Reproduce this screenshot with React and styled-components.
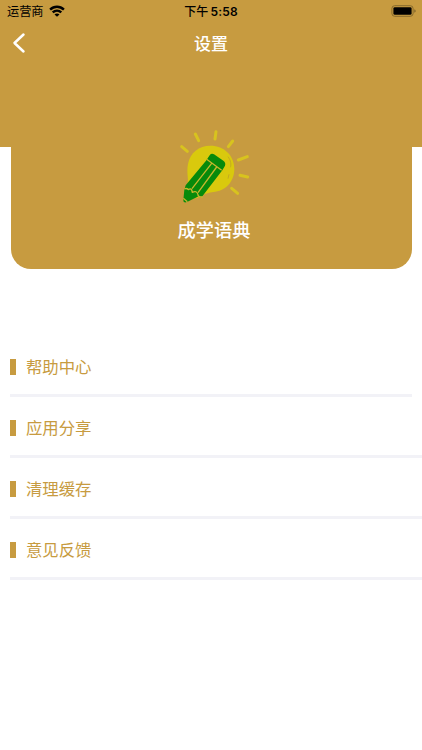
import styled, { createGlobalStyle } from 'styled-components';

const GOLD = '#c79b40';

const GlobalStyle = createGlobalStyle`
  * {
    box-sizing: border-box;
  }

  body {
    margin: 0;
    background: #fff;
    font-family: 'Inter', 'Noto Sans CJK SC', sans-serif;
    overflow: hidden;
  }
`;

const Screen = styled.div`
  height: 750px;
  overflow: hidden;
`;

const Header = styled.header`
  height: 147px;
  background: ${GOLD};
`;

const StatusBar = styled.div`
  display: grid;
  grid-template-columns: 1fr auto 1fr;
  align-items: center;
  height: 22px;
  padding: 0 6px 0 7px;
  color: #000;
  font-size: 12.2px;
  line-height: 20px;
`;

const Carrier = styled.div`
  display: flex;
  align-items: center;
  gap: 5px;

  span {
    padding-top: 2px;
  }
`;

const Time = styled.div`
  padding: 2px 1px 0 0;
  font-size: 12px;
  font-weight: 500;
  white-space: nowrap;
  word-spacing: -1px;
`;

const Digits = styled.span`
  font-weight: 600;
  letter-spacing: 0.2px;
`;

const Battery = styled.svg`
  justify-self: end;
`;

const NavBar = styled.nav`
  display: grid;
  grid-template-columns: 1fr auto 1fr;
  align-items: center;
  height: 42px;
  padding: 0 12px;
`;

const BackButton = styled.button`
  display: flex;
  width: 14px;
  padding: 0;
  border: 0;
  background: none;
`;

const Title = styled.h1`
  margin: 0;
  padding-top: 2px;
  color: #fff;
  font-size: 17px;
  font-weight: 500;
  line-height: 24px;
`;

const Card = styled.section`
  display: flex;
  flex-direction: column;
  align-items: center;
  height: 149px;
  margin: -27px 10.5px 0;
  padding-left: 7px;
  background: ${GOLD};
  border-radius: 0 0 20px 20px;
`;

const AppName = styled.div`
  color: #fff;
  font-size: 18.2px;
  font-weight: 500;
  line-height: 26px;
  margin: 7px 0 0 -1px;
`;

const Menu = styled.ul`
  margin: 67px 0 0;
  padding: 0 0 0 10.4px;
  list-style: none;
`;

const MenuItem = styled.li`
  display: flex;
  align-items: center;
  gap: 10px;
  height: 61px;
  padding-top: 3px;
  margin-right: ${({ $inset }) => ($inset ? '10.5px' : '0')};
  border-bottom: 3px solid #f2f2f7;
  color: ${GOLD};
  font-size: 16.4px;
  line-height: 24px;

  &::before {
    content: '';
    width: 5.5px;
    height: 16px;
    background: ${GOLD};
  }
`;

const items = ['帮助中心', '应用分享', '清理缓存', '意见反馈'];

const WifiIcon = () => (
  <svg width="16" height="12" viewBox="0 0 16 12" fill="none" stroke="#000" strokeWidth="2.4">
    <path d="M1.1 4.6C5 .8 11 .8 14.9 4.6" />
    <path d="M3.7 7.4C6.2 5.1 9.8 5.1 12.3 7.4" />
    <path d="M8 11.8 5.5 9.4C7 8.2 9 8.2 10.5 9.4Z" fill="#000" stroke="none" />
  </svg>
);

const BatteryIcon = () => (
  <Battery width="25" height="12" viewBox="0 0 25 12">
    <rect x=".9" y=".7" width="21.2" height="10.6" rx="2.8" fill="none" stroke="#866a2c" />
    <rect x="2.4" y="2.2" width="18.2" height="7.6" rx="1.4" fill="#000" />
    <path d="M23.4 4.2C25 4.8 25 7.2 23.4 7.8Z" fill="#765c26" />
  </Battery>
);

const Logo = () => (
  <svg width="90" height="90" viewBox="0 0 270 270">
    <g stroke="#d8c31e" strokeWidth="9" strokeLinecap="round">
      <path d="M35 80 52 94M76 42 86 62M138 35 135 57M188 63 175 80M205 120 232 110M210 166 233 171M185 205 203 220" />
    </g>
    <path
      d="M53 190C56 174 49 158 54 132C60 98 87 77 121 77C163 77 193 107 193 147C193 187 164 214 130 216C112 217 96 225 82 234L60 236Z"
      fill="#d9c90d"
    />
    <path d="M174 110C183 122 184 134 181 142M177 163 174 176" fill="none" stroke="#b99c2b" strokeWidth="2" />
    <path
      d="M113 115 119 106Q124 99 132 103L160 122Q168 128 165 137L157 151 97 229Q91 234 86 229L51 246Q39 250 40 240L43 209 47 196 108 122Z"
      fill="#078a0b"
    />
    <g fill="none" stroke="#c6b72c" strokeWidth="4" strokeLinejoin="round">
      <path d="M110 118 155 151M125 130 66 206M140 141 84 218" />
      <path d="M43 207Q50 203 55 209Q65 202 67 217Q80 210 84 224Q83 231 98 231" />
      <path d="M40 235 52 245" />
    </g>
  </svg>
);

const App = () => (
  <>
    <GlobalStyle />
    <Screen>
      <Header>
        <StatusBar>
          <Carrier>
            <span>运营商</span>
            <WifiIcon />
          </Carrier>
          <Time>
            下午 <Digits>5:58</Digits>
          </Time>
          <BatteryIcon />
        </StatusBar>
        <NavBar>
          <BackButton type="button" aria-label="返回">
            <svg width="14" height="22" viewBox="0 0 14 22" fill="none">
              <path d="M11.5 2.5 2.5 11 11.5 19.5" stroke="#fff" strokeWidth="2.5" strokeLinecap="round" strokeLinejoin="round" />
            </svg>
          </BackButton>
          <Title>设置</Title>
        </NavBar>
      </Header>
      <Card>
        <Logo />
        <AppName>成学语典</AppName>
      </Card>
      <Menu>
        {items.map((item, index) => (
          <MenuItem key={item} $inset={index === 0}>
            {item}
          </MenuItem>
        ))}
      </Menu>
    </Screen>
  </>
);

export default App;
